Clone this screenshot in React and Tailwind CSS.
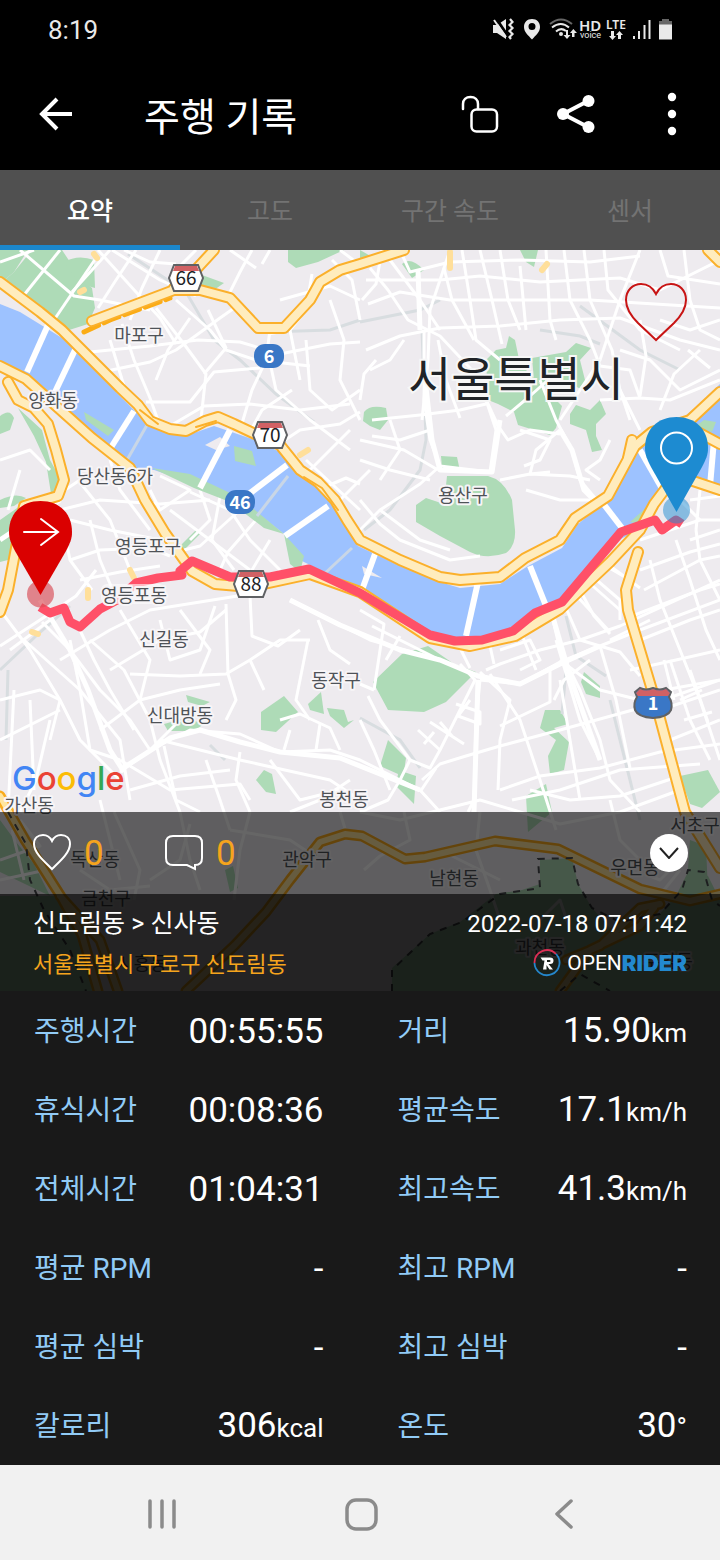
import React from "react";

const parks = [
  "M0 250H28L14 272L0 284Z",
  "M32 250H62L82 280L92 288L95 308L88 324L66 331L50 318L0 284L14 272Z",
  "M64 262Q78 254 94 260L95 288L80 284Z",
  "M288 250H344L318 262L296 268L288 262Z",
  "M202 275L224 283L214 290L200 287Z",
  "M360 250L374 258L360 264Z",
  "M402 264Q410 256 424 270L412 278Z",
  "M520 250H538L534 267L526 262Z",
  "M0 416Q10 408 14 418L10 430L0 434Z",
  "M18 408L42 430L50 460L60 478L52 500L46 462L34 436Z",
  "M0 500Q16 492 26 498L14 506L0 508Z",
  "M0 520L20 506L20 540L8 560L0 562Z",
  "M364 412Q370 404 386 408L388 420L380 430L370 426L363 421Z",
  "M441 456L457 457L460 471L442 468Z",
  "M416 505L426 498L444 504L447 476H488Q504 480 512 500L515 530Q516 546 506 553Q486 560 470 552L440 536L416 522Z",
  "M486 360L496 350L506 348L509 336L515 340L520 364L540 384L562 406L556 428L550 435L534 430L518 425L514 412L498 404L488 400Z",
  "M532 358L566 352L576 343L591 348L580 360L588 392L570 384L556 392L534 380Z",
  "M570 414L576 405L590 410L600 400L606 414L596 424L596 436L602 450L592 452L586 430L570 424Z",
  "M373 682L402 654L428 646L454 664L476 672L446 702L424 712L388 710Z",
  "M388 740L406 758L404 772L416 776L414 804L396 786L398 774L380 766Z",
  "M584 672L600 686L600 698L586 694L581 682Z",
  "M545 710H560L568 724L554 728L569 742L564 770L550 774L548 756L556 740L540 728Z",
  "M526 796L546 784L552 812L528 832Z",
  "M680 776L708 770L720 792L702 808L690 804Z",
  "M261 712L284 696L298 712L276 732L261 730Z",
  "M308 704L321 692L324 714L310 710Z",
  "M327 708L344 710L348 722L354 720L344 728L330 716Z",
  "M186 695L210 702L202 706L188 702Z",
  "M164 724L186 718L204 724L194 731H168Z",
  "M256 780L264 770L272 774L276 794L266 792Z",
  "M178 548L196 530L200 534L184 550Z",
  "M225 870L233 866L238 888L230 892Z",
  "M0 820L16 842L34 864L50 896L0 872Z",
  "M0 896H55L86 938L92 991H0Z",
  "M540 860L572 858L578 884L592 908L612 930L656 918L676 896L690 868L708 876L720 900V991H392V968L430 934L460 922L496 894L522 890L540 884Z",
  "M690 840L706 846L708 892L686 898Z",
];

const streets = [
  "M20 250L74 296L100 300L150 310", "M60 250L20 300", "M96 258L54 320", "M72 292L92 270L110 250", "M0 262L34 250",
  "M98 250L136 292L160 318L176 344", "M112 250L160 280L196 296", "M136 250L116 280L98 308", "M160 250L142 288L130 320",
  "M176 264L150 262L124 250", "M196 250L170 276", "M230 250L256 268", "M252 250L240 272L226 300", "M270 250L262 264",
  "M90 352L150 346L198 340L240 342L280 354L330 344L360 342", "M102 372L150 362L176 350L220 318L240 304",
  "M122 324L134 360L150 398L160 426", "M156 308L184 344L206 374L200 428", "M176 300L210 330L226 350L256 360L310 366",
  "M146 402L190 402L214 372L260 368", "M110 340L124 386", "M170 426L204 406L250 404L300 410L350 404",
  "M190 318L168 350L156 380", "M208 310L226 348L204 374", "M240 430L252 390L266 360L270 330", "M266 344L276 390L310 420L350 450",
  "M306 340L310 390L332 410L360 390", "M290 330L300 380", "M330 300L344 340L340 380L360 420", "M312 274L306 310L290 330L268 334",
  "M280 300L330 286L360 300", "M250 432L262 410L292 390", "M270 450L300 430L340 424L360 412", "M300 480L330 450L350 430",
  "M318 490L346 478L360 484", "M306 460L360 510", "M340 500L370 470", "M332 260L352 280L360 320", "M340 250L356 262",
  "M366 280H440L480 276L540 282L620 278L660 290L720 260", "M368 304L400 292L450 300L520 300L590 300L720 308",
  "M366 350L400 336L440 328L500 326L560 320L620 318L680 340L720 350", "M370 268L388 290L408 320L440 336L470 368L488 404L500 430",
  "M390 260L420 300L440 330", "M444 268L452 300L474 340", "M462 250L470 300L476 340L500 360", "M480 250L492 300L502 344",
  "M500 250L508 300L520 330", "M520 266L526 330", "M546 250L550 320L556 340", "M564 250L570 300L590 340L600 366",
  "M584 250L590 300L612 350L620 390L630 420", "M604 250L608 290L640 330L680 350", "M450 250L430 310L428 360L422 420",
  "M640 250L620 300L600 360L560 420", "M660 250L668 276L720 284", "M684 250L690 300L700 330L720 340",
  "M382 250L376 284L362 300", "M400 250L410 272L450 262L520 260L590 262L640 256", "M372 420L420 415L460 410L486 404",
  "M424 330L424 400L430 440L440 466L490 472L496 430L486 400", "M360 440L404 450L438 470", "M360 460L390 470L430 480",
  "M390 420L400 450L380 480", "M440 466L420 484L380 510L360 530", "M430 430L400 440L372 436", "M376 360L364 374L360 400",
  "M404 340L390 360L370 370", "M438 340L446 380L460 418", "M494 420L508 440L530 430L560 434", "M506 416L530 396L548 380",
  "M540 380L556 420L572 450L580 480L600 504", "M560 430L536 450L530 474L550 472", "M500 480L530 474L570 476L590 480",
  "M520 430L550 440L540 460L524 466", "M526 490L560 500L590 500", "M610 440L600 460L586 470L600 480", "M600 400L640 398L670 400L720 380",
  "M620 390L640 430", "M620 350L650 360L680 390L720 370", "M640 320L646 356L640 396", "M660 320L690 330L720 320",
  "M700 350L674 374L660 410", "M600 366L630 370L640 398", "M688 350L710 368", "M0 460L30 450L50 470", "M20 470L8 510",
  "M50 500L80 480L110 474L140 480", "M60 510L100 500L160 504L210 500", "M70 520L110 530L160 540", "M78 480L110 520L130 570",
  "M110 460L120 490L150 530", "M160 476L190 490L160 510L150 490", "M190 492L230 510L250 540L280 570", "M170 510L210 540L250 570",
  "M200 490L210 520L190 540", "M220 496L212 540L234 570", "M240 510L200 546L184 550", "M256 520L228 552L220 570", "M270 540L246 580",
  "M70 560L100 550L150 548L170 556", "M80 580L120 572L160 566", "M64 530L70 560L92 590", "M90 520L100 560L116 598",
  "M0 646L40 620L76 596L96 570", "M0 610L30 650L60 700L80 740L120 780", "M10 650L50 620", "M24 640L80 690L120 740L130 800",
  "M42 622L70 650L100 690L130 720L150 750", "M70 640L80 690L90 750L120 760", "M60 660L110 630L150 610L200 602L250 594",
  "M78 626L94 660L110 690L134 730", "M90 640L124 670L150 720L160 760L180 812", "M120 610L150 660L140 700L100 730",
  "M110 670L160 640L200 632L226 610", "M130 674L180 676L226 674L250 660L280 640L310 640", "M160 620L170 660L200 650L215 606",
  "M180 610L210 650L200 674", "M226 604L228 674L236 700L226 720", "M140 700L180 690L220 684", "M250 596L252 636L278 646L300 630",
  "M250 660L264 690", "M308 640L300 680L296 700L310 720", "M318 620L330 650L350 664", "M290 600L330 620L370 640L440 660",
  "M0 700L40 690L60 700", "M14 690L8 812", "M30 700L34 790", "M0 740L60 710", "M50 720L36 780L20 812", "M60 700L50 740",
  "M150 750L190 730L240 734L280 752L330 750L360 760L420 790L440 812", "M120 772L150 750L180 720", "M160 740L240 760L330 780L360 800",
  "M120 760L170 790L240 784L250 800", "M130 790L180 776L230 770", "M164 746L176 800L200 812", "M206 760L220 800L230 830",
  "M240 752L236 780L250 812", "M280 720L300 714L330 728L340 750", "M290 730L284 750", "M320 724L316 750", "M270 760L300 800L340 790",
  "M350 780L320 800L290 812", "M100 800L110 840L120 880", "M114 812L140 870L134 900", "M180 812L190 860L200 890", "M190 824L180 860L150 880",
  "M250 812L240 850L234 900", "M80 870L110 890L150 886", "M230 830L290 840L320 860", "M340 812L346 832", "M480 812L476 850L490 890L500 920",
  "M404 812L410 840L380 856L364 870", "M360 812L400 820L480 800L520 812L560 824L620 812L680 790", "M610 800L620 840L650 870",
  "M670 870L660 880L650 876M680 870L664 890", "M540 920L560 900L570 930", "M420 860L440 850L500 880",
  "M0 860L40 846L20 820", "M0 880L46 870", "M12 830L24 880",
  "M368 696L380 720L410 760L430 768L440 750L475 680L460 664", "M360 684L374 690", "M374 690L384 624L360 610", "M372 626L400 640L440 660",
  "M360 720L374 750L390 790", "M386 660L400 636", "M410 760L400 780L388 800L360 812", "M422 780L440 764L466 756L500 746L560 730L640 708L720 680",
  "M436 768L420 792", "M418 730L440 750M430 722L464 744M440 722L452 736M434 732L424 744", "M456 704L480 712L480 724L458 716L470 700",
  "M480 680L476 720L474 800L468 812", "M490 674L520 720L540 780L556 830", "M480 680L520 684L560 662L600 646L640 630L720 600",
  "M486 670L500 664L540 650L580 640L620 626L720 580", "M480 672L510 700L500 740L498 790", "M500 726L550 702L550 670",
  "M500 790L540 776L600 768L660 752L720 744", "M512 800L560 790L620 770L700 764", "M530 790L570 800L620 796L680 776",
  "M552 616L560 650L580 690L600 740L610 780L640 812", "M556 640L580 720L600 760", "M566 608L580 640L620 652L640 676",
  "M600 646L616 700L630 768", "M580 590L594 616L610 634", "M592 576L620 600L620 620", "M606 566L630 580L626 600",
  "M560 660L600 690L640 700", "M630 670L676 660L720 650", "M640 640L690 620L720 610", "M632 616L700 590L720 584",
  "M640 570L690 552L720 544", "M644 590L700 560L720 556", "M650 560L660 600L680 650L700 700L720 760",
  "M676 540L690 580L706 630L720 660", "M696 530L700 560L720 600", "M664 690L720 680", "M660 710L720 690", "M670 740L720 720",
  "M670 660L690 720L710 760", "M690 670L708 722", "M680 700L702 690M684 720L712 712", "M674 700L664 660", "M640 540L700 520L720 520",
  "M610 640L650 620", "M690 540L720 530", "M610 566L640 588M586 580L620 610M575 594L610 632", "M500 650L530 640L540 660L520 670",
  "M520 630L536 670", "M560 680L570 740L580 800", "M590 660L564 680L554 700", "M460 648L470 668M490 646L494 664",
  "M690 500L720 496M700 490L696 530M680 500L700 520", "M360 500L380 524L400 540L450 560L480 556", "M380 510L420 540L450 550",
];

const mainStreets = [
  "M420 330L418 270", "M424 370L432 440L440 470L492 472L500 420", "M560 430L572 450L584 490L598 504",
  "M552 614L570 676L600 760", "M290 600L340 625L400 650L440 660L478 676L520 684L560 664L600 646",
  "M120 770L170 738L200 730L240 742L280 752L340 758L420 790", "M40 600L70 650L88 690L110 750L124 772",
  "M60 500L0 540", "M478 680L474 812",
];

const bridges = [
  "M48 325L27 372", "M75 350L55 392", "M134 411L110 449", "M230 430L200 488", "M287 465L245 497", "M328 506L285 536",
  "M375 554L362 590", "M478 582L466 636", "M530 566L546 606", "M640 450L664 492", "M602 502L622 528", "M714 440L710 486",
];

const rails = [
  "M128 254L186 292L214 340L240 360L276 394L314 422", "M268 332L330 330L360 320", "M360 322L420 310L440 300", "M422 330L426 440L420 470L390 510L364 530",
  "M540 330L580 336L600 344", "M580 306L640 350L680 370", "M0 670L36 636L70 606", "M8 670L6 740", "M360 718L400 740L420 768",
  "M566 616L576 656L606 676", "M566 670L562 714", "M640 820L610 700", "M210 745L225 760",
];

const highways = [
  "M0 282L40 312L62 330L90 358L120 388L138 405L150 421L170 429L186 431L205 421L218 417L234 424L255 434L280 445L300 470L318 482L335 500L347 520L360 540L400 560L440 577L460 580L500 577L525 558L560 540L575 518L608 496L635 446L652 432L690 420L720 392",
  "M0 366L26 379L55 405L92 438L130 468L145 500L165 533L192 571L215 584L250 587L310 574L360 592L430 638L470 646L515 636L560 609L610 562L640 530L654 504L666 488L690 480L720 490",
  "M638 552L626 590L628 610L655 700L685 812L720 868",
  "M92 321L174 290L200 290L230 298L258 328L284 328L310 300L320 282L340 270L360 264L404 250",
  "M174 288L190 276L214 250",
  "M8 382L18 400L34 408L48 424L56 450L64 480L58 496L24 506L8 590L0 612",
  "M628 458L632 440", "M694 430L720 444", "M708 250L720 262",
];

const lowerHighways = [
  "M0 796L25 840L60 895L82 935L98 991M60 896L100 940L118 991",
  "M186 991L235 945L266 912L290 880L320 842L345 834L362 836L405 859L425 857L495 841L558 849L640 889L690 901L720 894",
  "M566 960L600 946L640 908L660 904M560 991L590 950L640 926L654 908",
];

const labels = [
  ["마포구", 139, 342], ["양화동", 53, 407], ["당산동6가", 115, 483], ["영등포구", 148, 553], ["영등포동", 134, 602],
  ["신길동", 164, 646], ["신대방동", 180, 722], ["동작구", 336, 687], ["용산구", 463, 502], ["봉천동", 344, 806],
  ["가산동", 29, 812], ["독산동", 95, 866], ["금천구", 106, 905], ["관악구", 307, 866], ["남현동", 454, 885],
  ["우면동", 635, 874], ["서초구", 695, 832], ["시흥동", 142, 970], ["과천동", 540, 954], ["주암동", 668, 968],
];

function RouteShield({ x, y, number }) {
  return (
    <g transform={`translate(${x} ${y})`}>
      <path d="M-12 -13H12L17 0L12 13H-12L-17 0Z" fill="#fff" stroke="#5f6164" strokeWidth="2" />
      <path d="M-11 -12H11L13 -7H-13Z" fill="#d16164" />
      <text y="7" textAnchor="middle" fontSize="19" fill="#202124">{number}</text>
    </g>
  );
}

function RoutePill({ x, y, number }) {
  return (
    <g transform={`translate(${x} ${y})`}>
      <rect x="-15" y="-12" width="30" height="24" rx="11" fill="#3a77c6" />
      <text y="7" textAnchor="middle" fontSize="18" fontWeight="700" fill="#fff">{number}</text>
    </g>
  );
}

function RouteMap() {
  return (
    <svg
      className="absolute inset-0 size-full font-['Noto_Sans_CJK_KR',sans-serif]"
      viewBox="0 250 720 741"
      preserveAspectRatio="xMidYMid slice"
      role="img"
      aria-label="주행 경로 지도"
    >
      <rect y="250" width="720" height="741" fill="#eeebef" />
      <g fill="#aedbb7">{parks.map((d) => <path key={d} d={d} />)}</g>
      <g fill="none" stroke="#d8dde0" strokeWidth="3">{rails.map((d) => <path key={d} d={d} />)}</g>
      <g fill="none" stroke="#fff" strokeWidth="3" strokeLinejoin="round">{streets.map((d) => <path key={d} d={d} />)}</g>
      <g fill="none" stroke="#fff" strokeWidth="5" strokeLinejoin="round">{mainStreets.map((d) => <path key={d} d={d} />)}</g>
      <path d="M0 304L20 312L46 328L62 338L90 366L138 414L158 430L185 436L214 426L255 440L280 452L300 474L330 496L345 522L358 546L400 566L440 582L460 588L500 584L528 566L562 548L578 524L610 498L638 450L656 436L680 420L700 404L720 384V490L690 480L666 488L652 506L640 530L618 540L560 602L514 630L470 640L432 634L360 590L312 566L300 560L284 534L256 512L232 497L196 484L154 470L132 470L92 436L58 402L28 376L0 362Z" fill="#9dc2ff" />
      <g fill="#aedbb7">
        <path d="M84 412L114 430L108 436L86 420Z" />
        <path d="M234 446L252 451L256 466L235 461Z" />
        <path d="M152 468L190 474L228 492L250 506L284 534L264 528L230 502L194 488Z" />
        <path d="M284 534L304 556L300 572L290 564Z" />
        <path d="M630 522L648 506L664 488L652 516L640 524Z" />
        <path d="M696 426L704 420L716 422L712 432Z" />
      </g>
      <path d="M205 445L220 437L230 446L216 450ZM362 566L382 578L364 574Z" fill="#eeebef" />
      <path d="M147 425L127 460M288 476L257 516M352 548L322 576" fill="none" stroke="#c9d6e6" strokeWidth="3" />
      <g fill="none" stroke="#fff" strokeWidth="6">{bridges.map((d) => <path key={d} d={d} />)}</g>
      <g fill="none" strokeLinejoin="round" strokeLinecap="round">
        <path d="M84 332L110 320L170 298" stroke="#fbac16" strokeWidth="5" strokeDasharray="16 6" />
        {highways.map((d) => <path key={d} d={d} stroke="#fbb02b" strokeWidth="12" />)}
        {highways.map((d) => <path key={d} d={d} stroke="#ffecbd" strokeWidth="8" />)}
        <path d="M140 410L158 424M196 427L216 421M304 477L322 488L338 510" stroke="#fbb02b" strokeWidth="2" />
        {lowerHighways.map((d) => <path key={d} d={d} stroke="#f9ab1c" strokeWidth="11" />)}
        {lowerHighways.map((d) => <path key={d} d={d} stroke="#ffe5a0" strokeWidth="6" />)}
        <path d="M450 252V268M542 270L547 264M94 254L97 258M80 292L84 290M300 455L308 450M88 590V598M32 632L38 634M130 570L134 578" stroke="#ffdf9a" strokeWidth="6" />
      </g>
      <path d="M8 812L26 844L30 880L44 910L70 950L86 991M392 991V970L430 934L462 922L500 894L540 888L538 859L572 858L578 884L592 908L620 922L660 914L682 890L688 870L704 872L712 900L720 906M560 991L580 974L610 991" fill="none" stroke="#4a4d50" strokeWidth="2" strokeDasharray="7 7" />
      <path d="M40 607L50 613L64 608L70 622L80 627L100 609L117 600L136 583L158 578L182 575L180 571L192 561L230 577L270 577L309 569L360 593L430 635L455 641L482 640L513 631L535 613L562 602L621 532L655 520L662 530L676 520L682 524" fill="none" stroke="#ff5068" strokeWidth="9" strokeLinejoin="round" />
      <rect x="101" y="584" width="64" height="20" rx="6" fill="#fff" opacity=".6" />
      <g fill="#4f5358" fontSize="18" textAnchor="middle" stroke="#f7f5f7" strokeWidth="4" strokeLinejoin="round" paintOrder="stroke">
        {labels.map(([name, x, y]) => <text key={name} x={x} y={y}>{name}</text>)}
      </g>
      <text x="516" y="396" fontSize="47" fill="#202327" textAnchor="middle" stroke="#f7f7f7" strokeWidth="4" paintOrder="stroke">서울특별시</text>
      <RouteShield x={186} y={278} number="66" />
      <RouteShield x={270} y={435} number="70" />
      <RouteShield x={251} y={584} number="88" />
      <RoutePill x={269} y={356} number="6" />
      <RoutePill x={240} y={502} number="46" />
      <g transform="translate(653 703)">
        <path d="M-18 -11L-13 -15Q-7 -12 0 -15Q7 -12 13 -15L18 -11L16 -6Q20 0 18 7Q15 14 0 15Q-15 14 -18 7Q-20 0 -16 -6Z" fill="#3a77c6" stroke="#5f6164" strokeWidth="2" />
        <path d="M-17 -10L-13 -14Q-7 -11 0 -14Q7 -11 13 -14L17 -10L15 -7H-15Z" fill="#d16164" />
        <text y="7" textAnchor="middle" fontSize="18" fontWeight="700" fill="#fff">1</text>
      </g>
      <circle cx="40.500" cy="594" r="13.500" fill="#d94b55" opacity=".65" />
      <path d="M40.500 595L15 551C11 543 9 539 9 532C9 513 22 501 40.500 501C59 501 72 513 72 532C72 539 70 543 66 551Z" fill="#da0000" />
      <path d="M24 532H57M41 519L58 532L41 545" fill="none" stroke="#fff" strokeWidth="2" strokeLinecap="round" />
      <circle cx="676.500" cy="510" r="13.500" fill="#1d8bd1" opacity=".5" />
      <path d="M676.500 512L651 467C647 459 645 455 645 448C645 429 658 417 676.500 417C695 417 708 429 708 448C708 455 706 459 702 467Z" fill="#1d8bd1" />
      <circle cx="676.500" cy="448" r="15.500" fill="none" stroke="#fff" strokeWidth="2" />
    </svg>
  );
}

function StatusIcons() {
  return (
    <svg className="h-10 w-[180px] font-['Noto_Sans',sans-serif]" viewBox="493 10 180 40" fill="#e9e9e9" aria-hidden="true">
      <path d="M493 25H497L506 19V39L497 33H493Z" />
      <path d="M495 17L508 36" stroke="#000" strokeWidth="3" />
      <path d="M494 20L506 37" stroke="#e9e9e9" strokeWidth="2" />
      <path d="M510 19L512.500 22L509.500 25L512.500 28L509.500 31L512.500 34L509.500 37L511 39" fill="none" stroke="#e9e9e9" strokeWidth="2.200" />
      <path fillRule="evenodd" d="M532 19C527 19 524 22.500 524 27C524 32 528 35 532 39.500C536 35 540 32 540 27C540 22.500 537 19 532 19ZM532 23A3.500 3.500 0 1 1 532 30A3.500 3.500 0 1 1 532 23Z" />
      <g fill="none" strokeWidth="2">
        <path d="M550 24Q561 15 572 24" stroke="#666" />
        <path d="M552 27.500Q561 20.500 569 27.500M556 31.500Q561 27 566 31" stroke="#e9e9e9" />
      </g>
      <circle cx="561" cy="34" r="2" />
      <path d="M566 30H568V35H570.500L567 39L563.500 35H566ZM572 37H574.500V33H577L573.300 29L570 33H572Z" />
      <text x="579" y="31" fontSize="15" fontWeight="600">HD</text>
      <text x="580" y="38" fontSize="9" className="font-[Roboto,sans-serif]">voice</text>
      <text x="606" y="29" fontSize="12" fontWeight="600">LTE</text>
      <path d="M611 31H614V36H616L612.500 40L609 36H611ZM618 39H621V35H623L619.500 31L616 35H618Z" />
      <path d="M633 36H635V39H633ZM638 31H640V39H638ZM643.500 25H645.500V39H643.500ZM648.500 20H650.500V39H648.500Z" />
      <path d="M662 19H669V21H672V25H659V21H662Z" fill="#666" />
      <path d="M659 24.500H672V39.500H659Z" />
    </svg>
  );
}

const tabs = ["요약", "고도", "구간 속도", "센서"];

const stats = [
  ["주행시간", "00:55:55", ""], ["거리", "15.90", "km"],
  ["휴식시간", "00:08:36", ""], ["평균속도", "17.1", "km/h"],
  ["전체시간", "01:04:31", ""], ["최고속도", "41.3", "km/h"],
  ["평균 RPM", "-", ""], ["최고 RPM", "-", ""],
  ["평균 심박", "-", ""], ["최고 심박", "-", ""],
  ["칼로리", "306", "kcal"], ["온도", "30", "°"],
];

const heart = "M20 36C13 29 2 20 2 11C2 5 6 2 11 2C15 2 18 4 20 8C22 4 25 2 29 2C34 2 38 5 38 11C38 20 27 29 20 36Z";

export default function App() {
  return (
    <div className="w-full bg-[#191919] font-[Roboto,'Noto_Sans_CJK_KR',sans-serif] text-white">
      <header className="bg-black">
        <div className="flex h-[60px] items-center justify-between pl-12 pr-[47px]">
          <span className="text-[26px] leading-8 text-[#e9e9e9]">8:19</span>
          <StatusIcons />
        </div>
        <div className="flex h-[110px] items-center pb-0.5">
          <button type="button" aria-label="뒤로" className="flex size-28 items-center justify-center">
            <svg className="size-9" viewBox="0 0 36 36" fill="none" stroke="#fff" strokeWidth="4">
              <path d="M34 18H5M19 3L4 18L19 33" />
            </svg>
          </button>
          <h1 className="grow pl-8 pt-2 text-[39px] leading-[56px]">주행 기록</h1>
          <button type="button" aria-label="공개 설정" className="flex size-24 items-center justify-center">
            <svg className="size-10" viewBox="0 0 40 40" fill="none" stroke="#fff" strokeWidth="2.500" strokeLinecap="round">
              <path d="M3 15V10C3 6 6 3 10.500 3C15 3 18 6 18 10V15" />
              <rect x="11.500" y="15.500" width="25.500" height="22" rx="5" />
            </svg>
          </button>
          <button type="button" aria-label="공유" className="flex size-24 items-center justify-center">
            <svg className="size-10" viewBox="0 0 40 40" fill="#fff">
              <path d="M7 20L32 7M7 20L32 33" stroke="#fff" strokeWidth="4" />
              <circle cx="7" cy="20" r="6" /><circle cx="32.500" cy="7" r="6" /><circle cx="32.500" cy="33" r="6" />
            </svg>
          </button>
          <button type="button" aria-label="더보기" className="flex size-24 items-center justify-center">
            <svg className="h-11 w-3" viewBox="0 0 12 44" fill="#fff">
              <circle cx="6" cy="5" r="4.200" /><circle cx="6" cy="22" r="4.200" /><circle cx="6" cy="39" r="4.200" />
            </svg>
          </button>
        </div>
      </header>

      <nav className="grid h-20 grid-cols-4 bg-[#505050]" role="tablist">
        {tabs.map((tab, i) => (
          <button
            key={tab}
            type="button"
            role="tab"
            aria-selected={i === 0}
            className={i === 0
              ? "border-b-5 border-[#1b87cc] pt-2 text-[25px] font-medium text-white"
              : "border-b-5 border-transparent pt-2 text-[25px] text-[#737373]"}
          >
            {tab}
          </button>
        ))}
      </nav>

      <main>
        <section className="relative overflow-hidden">
          <RouteMap />
          <div className="relative flex h-[562px] flex-col items-end justify-between px-3">
            <button type="button" aria-label="즐겨찾기" className="mr-5 mt-8 h-[62px] w-16">
              <svg className="size-full" viewBox="0 0 64 62" fill="none" stroke="#c81414" strokeWidth="2">
                <path d="M32 58L14 41C6 33 2 26 2 18C2 8 9 2 17 2C24 2 29 6 32 12C35 6 40 2 47 2C55 2 62 8 62 18C62 26 58 33 50 41Z" />
              </svg>
            </button>
            <p className="mb-2 w-full font-[Inter,sans-serif] text-[33px] font-medium leading-[52px]" aria-label="Google">
              <span className="text-[#4285f4]">G</span><span className="text-[#ea4335]">o</span><span className="text-[#fbbc05]">o</span><span className="text-[#4285f4]">g</span><span className="text-[#34a853]">l</span><span className="text-[#ea4335]">e</span>
            </p>
          </div>

          <div className="relative flex h-[82px] items-center bg-black/60 px-8">
            <button type="button" aria-label="좋아요" className="flex w-[132px] items-center gap-3 text-[35px] text-[#f5a41d]">
              <svg className="size-10" viewBox="0 0 40 40" fill="none" stroke="#fff" strokeWidth="2"><path d={heart} /></svg>
              <span className="pt-0.5">0</span>
            </button>
            <button type="button" aria-label="댓글" className="flex items-center gap-3 text-[35px] text-[#f5a41d]">
              <svg className="size-10" viewBox="0 0 40 40" fill="none" stroke="#fff" strokeWidth="2">
                <path d="M9 3H31Q38 3 38 10V25Q38 32 31 32V36L23 32H9Q2 32 2 25V10Q2 3 9 3Z" />
              </svg>
              <span className="pt-0.5">0</span>
            </button>
            <button type="button" aria-label="접기" className="ml-auto flex size-[38px] items-center justify-center rounded-full bg-white">
              <svg className="h-3 w-5" viewBox="0 0 20 12" fill="none" stroke="#222" strokeWidth="2"><path d="M1 1L10 11L19 1" /></svg>
            </button>
          </div>

          <div className="relative grid h-[97px] grid-cols-[1fr_auto] items-center bg-black/85 px-[33px] pt-3 pb-2">
            <h2 className="text-[25px] leading-9">신도림동 &gt; 신사동</h2>
            <time className="text-right text-[24px] leading-9" dateTime="2022-07-18T07:11:42">2022-07-18 07:11:42</time>
            <p className="pt-1 text-[22px] leading-9 text-[#f5a41d]">서울특별시 구로구 신도림동</p>
            <p className="flex items-center justify-end">
              <svg className="mr-1.5 size-7" viewBox="0 0 28 28" fill="none" strokeWidth="1.800" aria-hidden="true">
                <path d="M1.500 14A12.500 12.500 0 0 1 23 5" stroke="#dc2f55" />
                <path d="M23 5A12.500 12.500 0 1 1 1.500 14" stroke="#2586ca" />
                <path d="M7.500 8.500H17Q20.500 8.500 20.500 11.500Q20.500 15 17 15H15.500L20 20.500H16.500L13.500 16V20.500H10L11.500 11.500H9.500ZM14 11V13H16.500Q17.500 13 17.500 12T16.500 11Z" fill="#fff" fillRule="evenodd" />
              </svg>
              <span className="text-[21px] leading-7">OPEN</span>
              <span className="font-[Inter,sans-serif] text-[22px] font-black leading-7 text-[#2389cf]">RIDER</span>
            </p>
          </div>
        </section>

        <dl className="grid grid-cols-2 gap-x-[74px] pl-[34px] pr-[33px]">
          {stats.map(([label, value, unit]) => (
            <div key={label} className="flex h-[79px] items-center justify-between pt-0.5">
              <dt className="text-[28px] leading-10 text-[#91cbf6]">{label}</dt>
              <dd className="text-[35px] leading-10">
                {value}{unit && <span className={unit === "°" ? "text-[28px]" : "text-[26px]"}>{unit}</span>}
              </dd>
            </div>
          ))}
        </dl>
      </main>

      <footer className="grid h-[95px] grid-cols-[1fr_80px_1fr] items-center bg-[#f1f1f1] pl-0.5 pt-0.5">
        <button type="button" aria-label="최근 앱" className="flex justify-center">
          <svg className="h-8 w-8" viewBox="0 0 32 32" stroke="#8b8b8b" strokeWidth="3.500" strokeLinecap="round"><path d="M4 3V29M16 3V29M28 3V29" /></svg>
        </button>
        <button type="button" aria-label="홈" className="flex justify-center">
          <svg className="h-9 w-9" viewBox="0 0 36 36" fill="none" stroke="#8b8b8b" strokeWidth="3.500"><rect x="4" y="4" width="29" height="29" rx="9" /></svg>
        </button>
        <button type="button" aria-label="이전" className="flex justify-center pl-1">
          <svg className="h-8 w-8" viewBox="0 0 32 32" fill="none" stroke="#8b8b8b" strokeWidth="3.500" strokeLinecap="round" strokeLinejoin="round"><path d="M24 3L10 16L24 29" /></svg>
        </button>
      </footer>
    </div>
  );
}
